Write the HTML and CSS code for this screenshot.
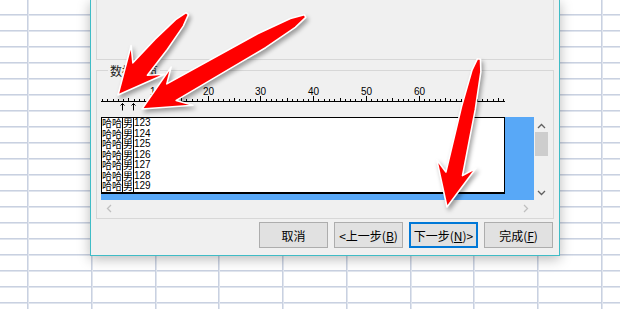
FILE: index.html
```html
<!DOCTYPE html>
<html>
<head>
    <meta charset="utf-8">
    <title>文本导入向导</title>
    <link rel="stylesheet" href="styles.css">
</head>
<body>
    <div class="sheet">
        <div class="dialog">
            <div class="group group-top"></div>
            <fieldset class="group preview-group">
                <legend>数据预览</legend>
                <svg class="ruler" width="410" height="30" viewBox="0 0 410 30">
                    <path class="ticks" d="M0 17.5H404
                        M1.5 17v-2m5 2v-2m6 2v-2m5 2v-2m5 2v-2m5 2v-2m6 2v-2m5 2v-2m5 2v-2m6 2v-2m5 2v-2
                        m5 2v-2m5 2v-2m6 2v-2m5 2v-2m5 2v-2m5 2v-2m6 2v-2m5 2v-2m5 2v-2m6 2v-2
                        m5 2v-2m5 2v-2m5 2v-2m6 2v-2m5 2v-2m5 2v-2m6 2v-2m5 2v-2m5 2v-2m5 2v-2
                        m6 2v-2m5 2v-2m5 2v-2m6 2v-2m5 2v-2m5 2v-2m5 2v-2m6 2v-2m5 2v-2m5 2v-2
                        m5 2v-2m6 2v-2m5 2v-2m5 2v-2m6 2v-2m5 2v-2m5 2v-2m5 2v-2m6 2v-2m5 2v-2
                        m5 2v-2m6 2v-2m5 2v-2m5 2v-2m5 2v-2m6 2v-2m5 2v-2m5 2v-2m6 2v-2m5 2v-2
                        m5 2v-2m5 2v-2m6 2v-2m5 2v-2m5 2v-2m5 2v-2m6 2v-2m5 2v-2m5 2v-2m6 2v-2
                        m5 2v-2m5 2v-2m5 2v-2m6 2v-2m5 2v-2m5 2v-2
                        M27.5 17v-3M80.5 17v-3M133.5 17v-3M186.5 17v-3M239.5 17v-3M291.5 17v-3M344.5 17v-3M397.5 17v-3
                        M54.5 17v-5M107.5 17v-5M159.5 17v-5M212.5 17v-5M265.5 17v-5M318.5 17v-5M371.5 17v-5"/>
                    <g class="ruler-nums">
                        <text x="54.5" y="11">10</text>
                        <text x="107.5" y="11">20</text>
                        <text x="159.5" y="11">30</text>
                        <text x="212.5" y="11">40</text>
                        <text x="265.5" y="11">50</text>
                        <text x="318.5" y="11">60</text>
                        <text x="371.5" y="11">70</text>
                    </g>
                    <path class="ticks" d="M21.5 19.5v7M19.5 21.5l2-2 2 2M32.5 19.5v7M30.5 21.5l2-2 2 2"/>
                </svg>
                <div class="preview">
                    <div class="preview-area">
                        <div class="preview-text">
                            <div class="row"><span class="c1">哈哈</span><span class="c2">男</span><span class="c3">123</span></div>
                            <div class="row"><span class="c1">哈哈</span><span class="c2">男</span><span class="c3">124</span></div>
                            <div class="row"><span class="c1">哈哈</span><span class="c2">男</span><span class="c3">125</span></div>
                            <div class="row"><span class="c1">哈哈</span><span class="c2">男</span><span class="c3">126</span></div>
                            <div class="row"><span class="c1">哈哈</span><span class="c2">男</span><span class="c3">127</span></div>
                            <div class="row"><span class="c1">哈哈</span><span class="c2">男</span><span class="c3">128</span></div>
                            <div class="row"><span class="c1">哈哈</span><span class="c2">男</span><span class="c3">129</span></div>
                            <div class="row"><span class="c1">哈哈</span><span class="c2">男</span><span class="c3">130</span></div>
                        </div>
                    </div>
                    <div class="vscroll">
                        <svg class="chev" width="9" height="6" viewBox="0 0 9 6"><path d="M1 5l3.5-3.5L8 5"/></svg>
                        <div class="thumb"></div>
                        <svg class="chev down" width="9" height="6" viewBox="0 0 9 6"><path d="M1 1l3.5 3.5L8 1"/></svg>
                    </div>
                    <div class="hscroll">
                        <svg class="chev off" width="6" height="9" viewBox="0 0 6 9"><path d="M5 1L1.5 4.5 5 8"/></svg>
                        <svg class="chev off" width="6" height="9" viewBox="0 0 6 9"><path d="M1 1l3.5 3.5L1 8"/></svg>
                    </div>
                    <div class="corner"></div>
                </div>
            </fieldset>
            <div class="buttons">
                <button>取消</button>
                <button>&lt;上一步(<u>B</u>)</button>
                <button class="default">下一步(<u>N</u>)&gt;</button>
                <button>完成(<u>F</u>)</button>
            </div>
        </div>

        <!-- annotation arrows drawn over the screenshot -->
        <svg class="arrows" width="620" height="309" viewBox="0 0 620 309">
            <polygon points="118,95 164.8,74.2 147.4,75.2 167.3,49.5 183.3,26.1 188.4,14.7 186.1,12.7 175.6,19.6 155.1,39.1 132.9,62.8 131.1,45.5"/>
            <polygon points="142,109 192.9,105.3 176.2,100.4 265.6,47.7 295.3,27.3 305.8,17.3 304.3,14.7 290.4,18.6 257.6,33.8 166.8,83.9 171.1,67.1"/>
            <polygon points="447,207 475.9,168.2 462.5,175.6 475.3,109.4 480.9,71.7 480.5,59.3 477.5,58.7 472.1,69.8 461.6,106.4 445.9,172 436.8,159.8"/>
        </svg>
    </div>
</body>
</html>
```

FILE: styles.css
```css
body {
    margin: 0;
    font-family: "Noto Sans CJK SC", "Liberation Sans", sans-serif;
}
.sheet {
    position: relative;
    width: 620px;
    height: 309px;
    overflow: hidden;
    background-color: #fff;
    background-image:
        repeating-linear-gradient(to right, transparent 0 27px, #c9d1e1 27px 28px, #e0e5ee 28px 29px, transparent 29px 63.78px),
        repeating-linear-gradient(to bottom, transparent 0 14px, #c9d1e1 14px 15px, #e0e5ee 15px 16px, transparent 16px 15.89px);
}
.dialog {
    display: flow-root;
    box-sizing: border-box;
    width: 470px;
    height: 256px;
    margin-left: 90px;
    background: #f0f0f0;
    border: 1px solid #3fbcc6;
    border-top: none;
    box-shadow: 0 3px 12px rgba(0, 0, 0, 0.28);
}
.group {
    box-sizing: border-box;
    border: 1px solid #d7d7d7;
}
.group-top {
    height: 61px;
    margin: -1px 5px 0 5px;
}
.preview-group {
    width: 458px;
    min-width: 0;
    margin: 3px 5px 0 5px;
    padding: 6px 3px 2px 4px;
}
.preview-group legend {
    margin-left: 7px;
    padding: 0 2px;
    font-size: 12px;
    line-height: 15px;
    color: #1a1a1a;
}
.ruler {
    display: block;
    margin-bottom: 3px;
}
.ticks {
    fill: none;
    stroke: #000;
    stroke-width: 1;
}
.ruler-nums text {
    font-family: "Liberation Sans", sans-serif;
    font-size: 10px;
    text-anchor: middle;
    fill: #000;
}
.preview {
    display: grid;
    grid-template-columns: 433px 15px;
    grid-template-rows: 83px 16px;
    width: 448px;
}
.preview-area {
    background: #58a8f7;
}
.preview-text {
    box-sizing: border-box;
    width: 404px;
    height: 77px;
    overflow: hidden;
    background: #fff;
    border: 1px solid #000;
    border-bottom-width: 2px;
}
.row {
    display: flex;
    height: 10.5px;
    line-height: 10.5px;
    font-size: 10px;
    color: #000;
}
.c1, .c2 {
    border-right: 1px solid #000;
}
.c1 {
    width: 20px;
}
.c2 {
    width: 10px;
}
.c3 {
    font-family: "Liberation Sans", sans-serif;
    font-size: 10px;
}
.vscroll {
    display: flex;
    flex-direction: column;
    align-items: center;
    padding-top: 6px;
    background: #f0f0f0;
}
.thumb {
    width: 13px;
    height: 24px;
    margin-top: 3px;
    background: #cdcdcd;
}
.chev {
    display: block;
}
.chev path {
    fill: none;
    stroke: #606060;
    stroke-width: 1.3;
}
.chev.down {
    margin-top: auto;
    margin-bottom: 4px;
}
.chev.off path {
    stroke: #bfbfbf;
}
.hscroll {
    display: flex;
    justify-content: space-between;
    align-items: center;
    padding: 0 5px;
    background: #f0f0f0;
}
.corner {
    background: #f0f0f0;
}
.buttons {
    display: flex;
    justify-content: flex-end;
    gap: 6px;
    margin: 3px 6px 0 0;
}
button {
    box-sizing: border-box;
    width: 69px;
    height: 26px;
    padding: 0;
    background: #e1e1e1;
    border: 1px solid #adadad;
    font-family: "Noto Sans CJK SC", sans-serif;
    font-size: 12px;
    color: #000;
}
button.default {
    border: 2px solid #0078d7;
}
.arrows {
    position: absolute;
    left: 0;
    top: 0;
    pointer-events: none;
}
.arrows polygon {
    fill: #ff0000;
    stroke: #fff;
    stroke-width: 1.6;
    stroke-linejoin: round;
    filter: drop-shadow(2px 3px 2px rgba(0, 0, 0, 0.35));
}
```
